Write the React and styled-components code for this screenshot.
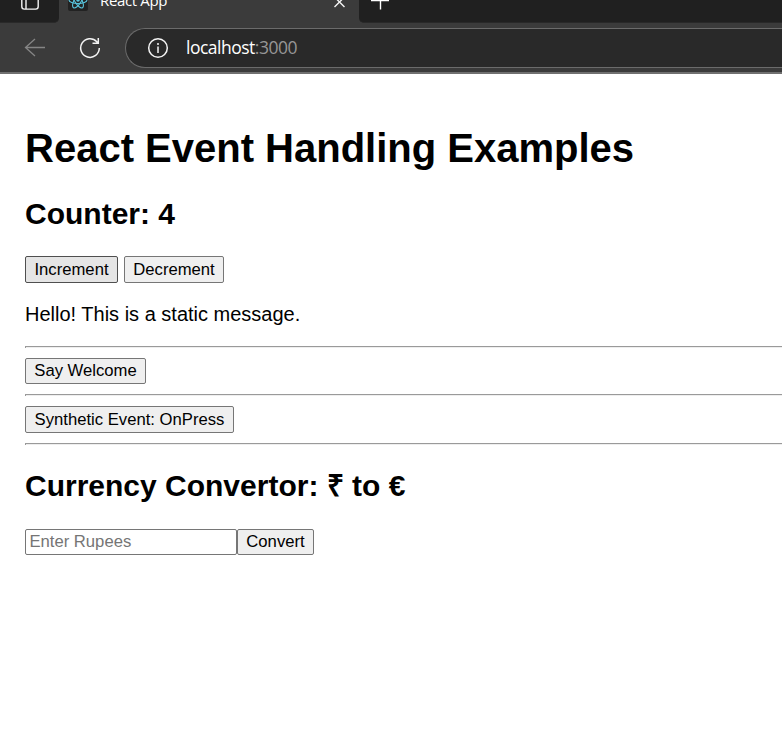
import React, { useState } from "react";
import styled, { createGlobalStyle } from "styled-components";

const GlobalStyle = createGlobalStyle`
  * { box-sizing: border-box; }
  html, body { margin: 0; background: #fff; overflow: hidden; }
`;

const Window = styled.div`
  width: 100%;
  height: 734px;
  overflow: hidden;
  color: #000;
  font-family: "Liberation Sans", Arial, sans-serif;
`;

const Chrome = styled.header`
  height: 74px;
  background: #3b3b3b;
  border-bottom: 2px solid #707070;
  font-family: "Open Sans", "Noto Sans", sans-serif;
`;

const TabStrip = styled.div`
  display: flex;
  height: 23px;
`;

const StripEnd = styled.div`
  height: 23px;
  background: #202020;
  border-bottom: 1px solid #292929;
  flex: ${(p) => (p.$grow ? "1" : "0 0 59px")};
  padding-left: ${(p) => (p.$grow ? "12px" : "21px")};
  border-radius: ${(p) => (p.$grow ? "0 0 0 5px" : "0 0 5px 0")};
`;

const Tab = styled.div`
  flex: 0 0 300px;
  height: 23px;
  display: flex;
  padding-left: 9px;
`;

const TabTitle = styled.span`
  width: 232px;
  margin: -10px 0 0 12px;
  color: #fff;
  font-size: 15px;
  line-height: 21px;
  letter-spacing: -0.35px;
  white-space: nowrap;
`;

const Icon = styled.svg`
  display: block;
  flex: none;
  fill: none;
  stroke: ${(p) => p.$color || "#f4f4f4"};
  stroke-width: ${(p) => p.$weight || 1.4};
`;

const Toolbar = styled.div`
  display: flex;
  height: 49px;
  padding: 5px 0 0 24px;
`;

const ToolButton = styled.span`
  width: ${(p) => p.$width}px;
  padding-top: 8px;
`;

const AddressBar = styled.div`
  flex: 1;
  height: 40px;
  display: flex;
  align-items: center;
  padding-left: 21px;
  background: #292929;
  border: 1px solid #6b6b6b;
  border-right: 0;
  border-radius: 20px 0 0 20px;
`;

const Url = styled.span`
  margin-left: 17px;
  padding-bottom: 2px;
  color: #fff;
  font-size: 17.5px;
  line-height: 24px;
  letter-spacing: -0.5px;
`;

const Port = styled.span`
  color: #969696;
`;

const Page = styled.main`
  padding: 51px 0 0 25px;
`;

const Title = styled.h1`
  margin: 0 0 26px;
  font-size: 40px;
  line-height: 47px;
  white-space: nowrap;
`;

const Heading = styled.h2`
  margin: ${(p) => p.$before || 0}px 0 ${(p) => p.$after}px;
  font-size: 30px;
  line-height: 32px;
  white-space: nowrap;
`;

const Message = styled.p`
  margin: 20px 0;
  font-size: 20px;
  line-height: 23px;
`;

const Row = styled.div`
  display: flex;
  gap: ${(p) => p.$gap || 0}px;
`;

const Button = styled.button`
  display: block;
  width: ${(p) => p.$width}px;
  height: ${(p) => p.$height || 27}px;
  padding: 0;
  color: #000;
  background: ${(p) => (p.$hovered ? "#e5e5e5" : "#efefef")};
  border: 1px solid ${(p) => (p.$hovered ? "#4f4f4f" : "#767676")};
  border-radius: 2px;
  font: 16.667px / 20px "Liberation Sans", Arial, sans-serif;
  white-space: nowrap;
`;

const Rule = styled.hr`
  height: 2px;
  margin: 10px 0;
  border: 0;
  border-top: 1px solid #9a9a9a;
  border-left: 1px solid #9a9a9a;
  background: #eee;
`;

const Input = styled.input`
  width: 212px;
  height: 26px;
  padding: 0 3.4px;
  border: 1px solid #767676;
  border-radius: 2px;
  outline: 0;
  background: #fff;
  font: 16.667px / 20px "Liberation Sans", Arial, sans-serif;
  &::placeholder { color: #757575; opacity: 1; }
`;

function Browser() {
  return (
    <Chrome>
      <TabStrip>
        <StripEnd>
          <Icon width="18" height="11" viewBox="0 0 18 11">
            <path d="M.8-3V6.5a2.6 2.6 0 0 0 2.6 2.6h11.2a2.6 2.6 0 0 0 2.6-2.6V-3M5 0v9" />
          </Icon>
        </StripEnd>
        <Tab>
          <Icon width="20" height="11" viewBox="0 0 20 11" $color="#58c4dc" $weight={1.1}>
            <path d="M0-4H20V9a2 2 0 0 1-2 2H2a2 2 0 0 1-2-2Z" fill="#222" stroke="none" />
            <ellipse cx="10" cy="0" rx="9" ry="3.5" />
            <ellipse cx="10" cy="0" rx="9" ry="3.5" transform="rotate(60 10 0)" />
            <ellipse cx="10" cy="0" rx="9" ry="3.5" transform="rotate(120 10 0)" />
            <circle cx="10" cy="0" r="1.8" fill="#58c4dc" stroke="none" />
          </Icon>
          <TabTitle>React App</TabTitle>
          <Icon width="14" height="9" viewBox="0 0 14 9">
            <path d="m2.5-3 10 10M12.5-3l-10 10" />
          </Icon>
        </Tab>
        <StripEnd $grow>
          <Icon width="18" height="11" viewBox="0 0 18 11" $color="#fff">
            <path d="M0 .5h18M9.5-3V9.5" />
          </Icon>
        </StripEnd>
      </TabStrip>
      <Toolbar>
        <ToolButton $width={55}>
          <Icon width="22" height="24" viewBox="0 0 22 24" $color="#858585" $weight={1.3}>
            <path d="M21 11.5H1.5M11 3 1.5 11.5 11 20" />
          </Icon>
        </ToolButton>
        <ToolButton $width={46}>
          <Icon width="22" height="24" viewBox="0 0 22 24" $weight={1.5}>
            <path d="M20.3 12A9.3 9.3 0 1 1 17.8 5.7L19 7M19.3 2v5.3h-5.8" />
          </Icon>
        </ToolButton>
        <AddressBar>
          <Icon width="22" height="22" viewBox="0 0 22 22" $weight={1.5}>
            <circle cx="11" cy="11" r="9.3" />
            <path d="M11 9.6V16" />
            <circle cx="11" cy="7" r="1" fill="#f4f4f4" stroke="none" />
          </Icon>
          <Url>localhost<Port>:3000</Port></Url>
        </AddressBar>
      </Toolbar>
    </Chrome>
  );
}

export default function App() {
  const [count, setCount] = useState(4);
  return (
    <Window>
      <GlobalStyle />
      <Browser />
      <Page>
        <Title>React Event Handling Examples</Title>
        <Heading $after={26}>Counter: {count}</Heading>
        <Row $gap={6}>
          <Button $width={93} $hovered onClick={() => setCount(count + 1)}>Increment</Button>
          <Button $width={100} onClick={() => setCount(count - 1)}>Decrement</Button>
        </Row>
        <Message>Hello! This is a static message.</Message>
        <Rule />
        <Button $width={121} $height={26}>Say Welcome</Button>
        <Rule />
        <Button $width={209}>Synthetic Event: OnPress</Button>
        <Rule />
        <Heading $before={25} $after={27}>Currency Convertor: ₹ to €</Heading>
        <Row>
          <Input placeholder="Enter Rupees" />
          <Button $width={77} $height={26}>Convert</Button>
        </Row>
      </Page>
    </Window>
  );
}
